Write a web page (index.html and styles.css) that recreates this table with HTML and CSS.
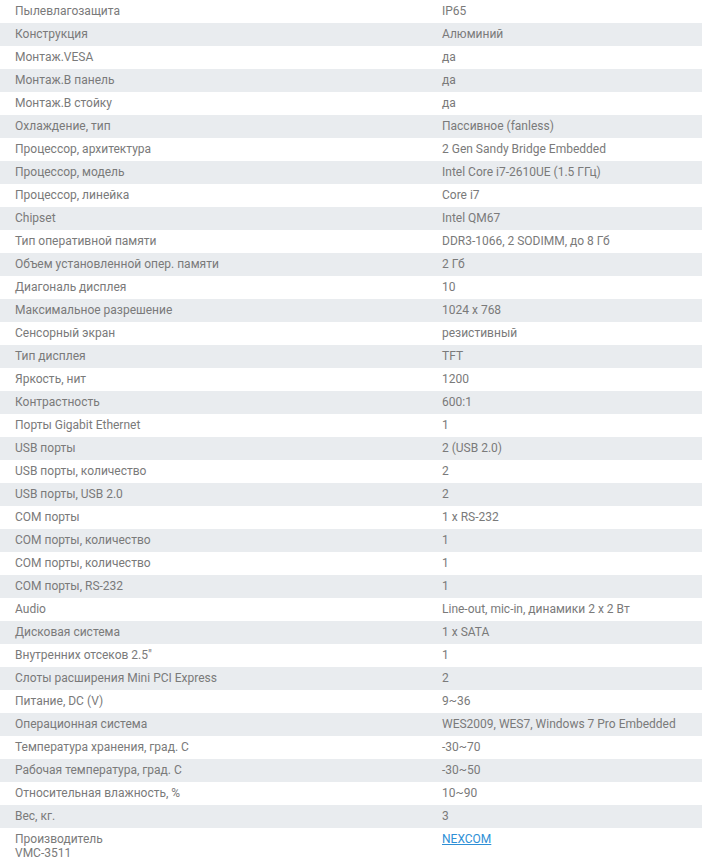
FILE: index.html
```html
<!DOCTYPE html>
<html lang="ru">
<head>
<meta charset="utf-8">
<link rel="stylesheet" href="styles.css">
</head>
<body>
<table class="specs">
<tbody>
<tr><td class="k">Пылевлагозащита</td><td class="v">IP65</td></tr>
<tr><td class="k">Конструкция</td><td class="v">Алюминий</td></tr>
<tr><td class="k">Монтаж.VESA</td><td class="v">да</td></tr>
<tr><td class="k">Монтаж.В панель</td><td class="v">да</td></tr>
<tr><td class="k">Монтаж.В стойку</td><td class="v">да</td></tr>
<tr><td class="k">Охлаждение, тип</td><td class="v">Пассивное (fanless)</td></tr>
<tr><td class="k">Процессор, архитектура</td><td class="v">2 Gen Sandy Bridge Embedded</td></tr>
<tr><td class="k">Процессор, модель</td><td class="v">Intel Core i7-2610UE (1.5 ГГц)</td></tr>
<tr><td class="k">Процессор, линейка</td><td class="v">Core i7</td></tr>
<tr><td class="k">Chipset</td><td class="v">Intel QM67</td></tr>
<tr><td class="k">Тип оперативной памяти</td><td class="v">DDR3-1066, 2 SODIMM, до 8 Гб</td></tr>
<tr><td class="k">Объем установленной опер. памяти</td><td class="v">2 Гб</td></tr>
<tr><td class="k">Диагональ дисплея</td><td class="v">10</td></tr>
<tr><td class="k">Максимальное разрешение</td><td class="v">1024 x 768</td></tr>
<tr><td class="k">Сенсорный экран</td><td class="v">резистивный</td></tr>
<tr><td class="k">Тип дисплея</td><td class="v">TFT</td></tr>
<tr><td class="k">Яркость, нит</td><td class="v">1200</td></tr>
<tr><td class="k">Контрастность</td><td class="v">600:1</td></tr>
<tr><td class="k">Порты Gigabit Ethernet</td><td class="v">1</td></tr>
<tr><td class="k">USB порты</td><td class="v">2 (USB 2.0)</td></tr>
<tr><td class="k">USB порты, количество</td><td class="v">2</td></tr>
<tr><td class="k">USB порты, USB 2.0</td><td class="v">2</td></tr>
<tr><td class="k">COM порты</td><td class="v">1 x RS-232</td></tr>
<tr><td class="k">COM порты, количество</td><td class="v">1</td></tr>
<tr><td class="k">COM порты, количество</td><td class="v">1</td></tr>
<tr><td class="k">COM порты, RS-232</td><td class="v">1</td></tr>
<tr><td class="k">Audio</td><td class="v">Line-out, mic-in, динамики 2 x 2 Вт</td></tr>
<tr><td class="k">Дисковая система</td><td class="v">1 x SATA</td></tr>
<tr><td class="k">Внутренних отсеков 2.5"</td><td class="v">1</td></tr>
<tr><td class="k">Слоты расширения Mini PCI Express</td><td class="v">2</td></tr>
<tr><td class="k">Питание, DC (V)</td><td class="v">9~36</td></tr>
<tr><td class="k">Операционная система</td><td class="v">WES2009, WES7, Windows 7 Pro Embedded</td></tr>
<tr><td class="k">Температура хранения, град. С</td><td class="v">-30~70</td></tr>
<tr><td class="k">Рабочая температура, град. С</td><td class="v">-30~50</td></tr>
<tr><td class="k">Относительная влажность, %</td><td class="v">10~90</td></tr>
<tr><td class="k">Вес, кг.</td><td class="v">3</td></tr>
<tr class="last"><td class="k">Производитель<br>VMC-3511</td><td class="v"><a href="#" class="brand">NEXCOM</a></td></tr>
</tbody>
</table>
</body>
</html>
```
FILE: styles.css
```css
html, body {
  margin: 0;
  padding: 0;
  background: #fff;
}
body {
  font-family: Roboto, "Liberation Sans", sans-serif;
  font-size: 12px;
  color: #7a7a7a;
}
.specs {
  width: 702px;
  border-collapse: collapse;
  table-layout: fixed;
}
.specs tr {
  height: 23px;
}
.specs tr:nth-child(even) {
  background: #e9ecef;
}
.specs td {
  padding: 0 0 2px 0;
  vertical-align: middle;
  line-height: 14px;
}
.specs td.k {
  width: 427px;
  padding-left: 15px;
}
.specs td.v {
  padding-left: 0;
}
.specs tr.last td {
  vertical-align: top;
  padding-top: 4px;
  padding-bottom: 0;
}
.brand {
  color: #2e8fd6;
  text-decoration: underline;
}
```
